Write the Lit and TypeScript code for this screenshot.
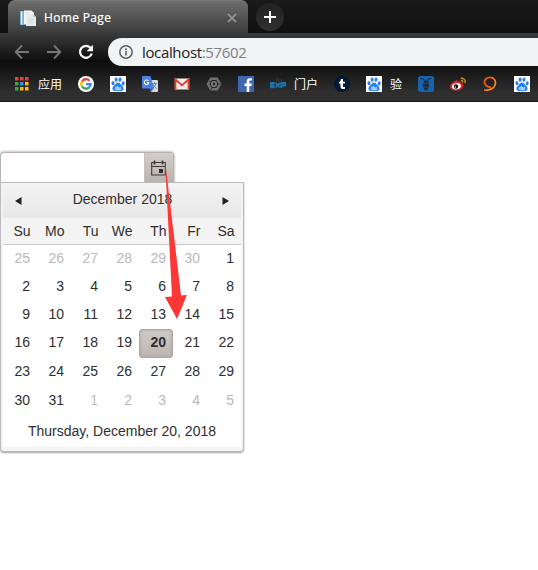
import { LitElement, html, css, svg } from "lit";
import { customElement } from "lit/decorators.js";
import { classMap } from "lit/directives/class-map.js";

const icon = (w: number, h: number, body: unknown) =>
  html`<svg width=${w} height=${h} viewBox="0 0 ${w} ${h}">${body}</svg>`;

const baidu = icon(16, 16, svg`
  <rect width="16" height="16" fill="#fff"/>
  <g fill="#2a7cf5">
    <ellipse cx="3" cy="7.2" rx="1.5" ry="2.1" transform="rotate(-12 3 7.2)"/>
    <ellipse cx="6.1" cy="3.6" rx="1.5" ry="2.2"/>
    <ellipse cx="10" cy="3.6" rx="1.5" ry="2.2" transform="rotate(10 10 3.6)"/>
    <ellipse cx="13.2" cy="7.4" rx="1.5" ry="2.1" transform="rotate(8 13.2 7.4)"/>
    <path d="M8 6.5c1.7 0 2.2 1.3 3.3 2.5 1.3 1.3 2.5 2.1 2.2 3.9-.3 2-2.200 2.300-5.500 1.800-3.300.500-5.200.200-5.500-1.800-.3-1.800.900-2.600 2.200-3.900C5.800 7.800 6.300 6.500 8 6.500z"/>
  </g>
  <text x="4.800" y="13.600" class="du">du</text>`);

const google = icon(16, 16, svg`
  <circle cx="8" cy="8" r="8" fill="#fff"/>
  <g fill="none" stroke-width="2.300">
    <path d="M4 5.500A4.750 4.750 0 0 1 11.500 4.700" stroke="#ea4335"/>
    <path d="M4 5.500A4.750 4.750 0 0 0 4 10.500" stroke="#fbbc05"/>
    <path d="M4 10.500A4.750 4.750 0 0 0 11 11.700" stroke="#34a853"/>
    <path d="M8 8.100H12.700A4.750 4.750 0 0 1 11 11.700" stroke="#4285f4"/>
  </g>`);

const translate = icon(16, 16, svg`
  <path d="M6 4h9q1 0 1 1v10q0 1-1 1H9z" fill="#d5d8dc"/>
  <path d="M9 16l-1-4 4 0z" fill="#2f5fc4"/>
  <path d="M1 0h7.500l3.700 12.500H1q-1 0-1-1V1q0-1 1-1z" fill="#4a82ea"/>
  <path d="M6.400 5A2.200 2.200 0 1 0 6.700 6.800H4.800" fill="none" stroke="#fff" stroke-width="1.100"/>
  <path d="M10 7.500h5M12.500 6.300v1.200M14 7.500q-.5 3-3.500 5M11.300 8.500q1 3 3.300 4" fill="none" stroke="#72808c" stroke-width=".9"/>`);

const gmail = icon(16, 16, svg`
  <path d="M1 2.500h14v11H1z" fill="#f1efed"/>
  <path d="M2.500 13l5.500-5 5.500 5" fill="none" stroke="#d6cfcb" stroke-width=".8"/>
  <path d="M1.400 13.500V3.500L8 9.200l6.600-5.700v10" fill="none" stroke="#dc4437" stroke-width="2"/>`);

const cube = icon(16, 16, svg`
  <path d="M5 2.800h6L14 8l-3 5.200H5L2 8z" fill="none" stroke="#707070" stroke-width="2.400"/>
  <circle cx="8" cy="8" r="2.200" fill="none" stroke="#808080" stroke-width="1.600"/>
  <path d="M3 5l2 1.500M14.500 8h-3M4.500 14.500L6 12" stroke="#292929" stroke-width=".8"/>`);

const facebook = icon(16, 16, svg`
  <rect width="16" height="16" fill="#4267b2"/>
  <path d="M8.700 16V10H6.500V7.400h2.200V5.600C8.700 3.300 10 2.200 12 2.200l1.900.1v2.300h-1.400c-1 0-1.200.5-1.200 1.300v1.500h2.500l-.4 2.600h-2.100v6z" fill="#fff"/>`);

const portal = icon(16, 16, svg`
  <path d="M6 3l1 3M8 2l1 4M11 3l1 3" stroke="#403c39" stroke-width="1"/>
  <g fill="none" stroke="#1a72ad" stroke-width="2">
    <path d="M5 7H1v4.300h3.800M1 9.200h3.500M5.500 7l4.500 4.300M10 7l-4.500 4.300M11.500 12V7h3.700v2.600h-3.500"/>
  </g>`);

const tumblr = icon(16, 16, svg`
  <circle cx="8" cy="8" r="8" fill="#001935"/>
  <path d="M7 3h2v2.700h2v1.900H9v2.600c0 1 .8 1 2 .6v1.900c-2.600.8-4.500.2-4.500-2V7.600H5V6.100C6.300 5.600 6.800 4.600 7 3z" fill="#fff"/>`);

const bee = icon(16, 16, svg`
  <rect width="16" height="16" rx="2.500" fill="#1763ad"/>
  <path d="M2.500 2.500q3.500-.5 3.700 2.500M13.500 2.500q-3.500-.5-3.700 2.500" fill="none" stroke="#172d48" stroke-width="1.100"/>
  <path d="M5.500 5.500Q8 3.500 10.500 5.500V7h-5zM5 7.500h6v4H5zM5.500 12h5Q10 14 8 14.500 6 14 5.500 12z" fill="#172d48"/>`);

const weibo = icon(16, 16, svg`
  <path d="M6.300 4.400c1.400-.4 1.900.4 1.600 1.500 2-.7 3.500-.3 3 1.200 1.800.5 2.700 1.600 2.300 3.200C12.600 13 9.500 14.500 6 14.500c-3.400 0-6-1.600-6-4.100 0-2.400 3.800-5.500 6.300-6z" fill="#e0232a"/>
  <ellipse cx="6.400" cy="10.200" rx="4.500" ry="3.100" fill="#fff" transform="rotate(-8 6.400 10.200)"/>
  <circle cx="6" cy="10.500" r="2.200" fill="#111"/><circle cx="5.300" cy="11" r=".7" fill="#fff"/>
  <path d="M10.800 2.300c3-.5 5.100 1.800 4.100 4.700M10.800 4.600c1.400-.2 2.200.6 1.800 1.900" fill="none" stroke="#c98a1c" stroke-width="1.500"/>`);

const swirl = icon(16, 16, svg`
  <path d="M9 11.500C4.500 11 1.500 8 2.600 4.800 4 1.200 8.500.6 11.300 2.600c2.900 2.200 2.700 6.200.4 8.700C9.400 13.800 6 14.300 2 14" fill="none" stroke="#ef5b12" stroke-width="1.800"/>
  <path d="M10.500 1.600c3.500 1.600 4 5.600 2 8.600-1.900 2.700-4.800 4-8.300 4.200" fill="none" stroke="#f9a51a" stroke-width=".9"/>`);

const dots = ["#ea4335", "#ea4335", "#ea4335", "#34a853", "#4285f4", "#fbbc05", "#34a853", "#fbbc05", "#fbbc05"];
const apps = icon(16, 16, dots.map((c, i) =>
  svg`<rect x=${1 + (i % 3) * 5} y=${1 + Math.floor(i / 3) * 5} width="3.500" height="3.500" fill=${c}/>`));

const bookmarks = [
  { icon: apps, label: "应用" }, { icon: google }, { icon: baidu }, { icon: translate },
  { icon: gmail }, { icon: cube }, { icon: facebook }, { icon: portal, label: "门户" },
  { icon: tumblr }, { icon: baidu, label: "验" }, { icon: bee }, { icon: weibo },
  { icon: swirl }, { icon: baidu },
];

@customElement("browser-chrome")
class BrowserChrome extends LitElement {
  static styles = css`
    :host { display: block; height: 102px; position: relative; overflow: hidden; background: #1a1a1a;
      font-family: "Open Sans", "Noto Sans", "Noto Sans CJK SC", sans-serif; color: #fff; }
    svg { display: block; flex: none; }
    .tabs { height: 33px; display: flex; background: linear-gradient(#1a1a1a, #101010); padding-left: 8px; }
    .tab { box-sizing: border-box; width: 240px; height: 33px; border-radius: 7px 7px 0 0; display: flex; align-items: center;
      padding: 1px 11px 0 12px; background: linear-gradient(#6d6d6d, #3b3b3b); border-top: 1px solid #7c7c7c; }
    .title { font-size: 12px; line-height: 18px; margin-left: 8px; flex: 1; letter-spacing: .35px; -webkit-text-stroke: .2px #fff; }
    .plus { width: 28px; height: 28px; margin: 3px 0 0 8px; border-radius: 50%; background: linear-gradient(#222, #303030);
      display: grid; place-items: center; }
    .bar { height: 33px; display: flex; box-sizing: border-box; padding: 5px 0 0 14px; background: linear-gradient(#3b3b3b, #0e0e0e 28px, #040404 28px, #111 29px); }
    .nav { width: 94px; height: 28px; display: flex; gap: 16px; align-items: center; }
    .address { flex: 1; height: 28px; display: flex; align-items: center; border-radius: 14px 0 0 14px; background: #f1f3f4;
      color: #202124; padding-left: 11px; gap: 9px; font: 15px/28px "Open Sans", "Noto Sans", sans-serif; }
    .url { letter-spacing: -.35px; padding-bottom: 1px; }
    .port { color: #7b8085; }
    .marks { height: 36px; box-sizing: border-box; border-bottom: 1px solid #151515; padding-left: 14px; display: flex; align-items: center; gap: 16px;
      background: linear-gradient(#121212, #2e2e2e 26px); }
    .mark { display: flex; gap: 8px; align-items: center; flex: none; }
    .label { font: 12px/16px "Noto Sans CJK SC", sans-serif; }
    .du { font: bold 5px "Liberation Sans", sans-serif; fill: #fff; }
  `;
  render() {
    return html`
      <div class="tabs">
        <div class="tab">
          ${icon(16, 16, svg`
            <path d="M0 1h6v14H0z" fill="#7db0cf"/><path d="M1 1.500h1.200v13H1z" fill="#e4f1f8"/>
            <path d="M4 .5h7.500L14 3v11H4z" fill="#f4f7f8"/>
            <path d="M6 4h7l3 3v9H6z" fill="#e7ebed"/><path d="M13 4v3h3" fill="#bac8d0"/>
            <path d="M8 9h6M8 11h6M8 13h6M5.500 3h5" stroke="#cbd3d8" stroke-width=".7"/>`)}
          <div class="title">Home Page</div>
          ${icon(10, 10, svg`<path d="M1 1l8 8M9 1l-8 8" stroke="#989898" stroke-width="1.700"/>`)}
        </div>
        <div class="plus">${icon(12, 12, svg`<path d="M6 0v12M0 6h12" stroke="#fff" stroke-width="2"/>`)}</div>
      </div>
      <div class="bar">
        <div class="nav">
          ${icon(16, 16, svg`<path d="M15 8H2M8 1.500L1.700 8 8 14.500" fill="none" stroke="#777" stroke-width="1.800"/>`)}
          ${icon(16, 16, svg`<path d="M1 8h13M8 1.500L14.300 8 8 14.500" fill="none" stroke="#777" stroke-width="1.800"/>`)}
          ${icon(16, 16, svg`<path d="M12.700 4A6 6 0 1 0 13.800 9.500" fill="none" stroke="#fff" stroke-width="2.200"/><path d="M15 .8v6.400H8.600z" fill="#fff"/>`)}
        </div>
        <div class="address">
          ${icon(14, 14, svg`<circle cx="7" cy="7" r="6.200" fill="none" stroke="#5f6368" stroke-width="1.500"/><path d="M7 6v4.500M7 3.300V5" stroke="#5f6368" stroke-width="1.600"/>`)}
          <div class="url">localhost<span class="port">:57602</span></div>
        </div>
      </div>
      <div class="marks">
        ${bookmarks.map((b) => html`<div class="mark">${b.icon}${b.label ? html`<span class="label">${b.label}</span>` : ""}</div>`)}
      </div>`;
  }
}

@customElement("date-picker")
class DatePicker extends LitElement {
  static styles = css`
    :host { display: block; position: relative; width: 244px; font: 14px/20px "Liberation Sans", Arial, sans-serif; color: #2e2e2e; }
    svg { display: block; }
    .field { width: 174px; height: 30px; box-sizing: border-box; border: 1px solid #b9b2ae; border-bottom: 0; border-radius: 4px 4px 0 0;
      display: flex; background: #fff; box-shadow: 0 0 2px 1px #c8c8c8; overflow: hidden; }
    .input { flex: 1; }
    .button { width: 29px; box-sizing: border-box; border-left: 1px solid #c5beba; background: linear-gradient(#d3cdca, #b9b2ae); padding: 7px 0 0 6px; }
    .popup { position: relative; width: 244px; height: 270px; box-sizing: border-box; border: 1px solid #bababa; border-radius: 0 0 4px 4px;
      padding: 2px; background: #f4f4f4; box-shadow: 0 1px 2px 0 #a5a5a5; }
    .head { height: 33px; box-sizing: border-box; display: flex; align-items: center; justify-content: space-between; padding: 0 12px 2px; background: linear-gradient(#f3f3f3, #e8e6e6); }
    .month { padding: 0 0 3px 1px; }
    .week, .days { display: grid; grid-template-columns: repeat(7, 34px); }
    .week { height: 27px; line-height: 26px; border-bottom: 1px solid #cbcbcb; box-sizing: border-box; width: 238px; }
    .days { grid-template-rows: 28px 28px 28px 29px 29px 29px; background: #fff; }
    .name { text-align: right; padding-right: 6.5px; }
    .day { box-sizing: border-box; text-align: right; padding-right: 7px; line-height: 26px; }
    .muted { color: #b8b8b8; }
    .picked { font-weight: bold; border: 1px solid #aca5a1; border-radius: 3px; background: linear-gradient(#d0cac7, #bcb5b1); padding-right: 6px; line-height: 24px;
      box-shadow: inset 0 0 3px #aaa29e; }
    .foot { height: 31px; line-height: 30px; text-align: center; background: #fff; }
    .arrow { position: absolute; left: 160px; top: 8px; }
  `;
  render() {
    const days = [25, 26, 27, 28, 29, 30, ...Array.from({ length: 31 }, (_, i) => i + 1), 1, 2, 3, 4, 5];
    return html`
      <div class="field">
        <div class="input"></div>
        <div class="button">${icon(16, 17, svg`
          <path d="M.7 2.500h13.600v12.500H.7zM.7 6.500h13.600" fill="none" stroke="#3c3835" stroke-width="1.100"/>
          <path d="M3.500 .5v4M11.500 .5v4" stroke="#3c3835" stroke-width="1.600"/>
          <path d="M8 9h4v4H8z" fill="#2e2e2e"/>`)}</div>
      </div>
      <div class="popup">
        <div class="head">
          ${icon(7, 8, svg`<path d="M6.500 0v8L0 4z" fill="#222"/>`)}
          <span class="month">December 2018</span>
          ${icon(7, 8, svg`<path d="M.5 0v8L7 4z" fill="#222"/>`)}
        </div>
        <div class="week">${["Su", "Mo", "Tu", "We", "Th", "Fr", "Sa"].map((d) => html`<div class="name">${d}</div>`)}</div>
        <div class="days">${days.map((d, i) => html`<div class=${classMap({ day: true, muted: i < 6 || i > 36, picked: i === 25 })}>${d}</div>`)}</div>
        <div class="foot">Thursday, December 20, 2018</div>
      </div>
      <svg class="arrow" width="32" height="162" viewBox="0 0 32 162"><path d="M5 0L21 135.500l6-.500L17 159 5 137l7-.500z" fill="#fd3636"/></svg>`;
  }
}

@customElement("app-root")
class AppRoot extends LitElement {
  static styles = css`
    :host { display: block; height: 570px; background: #fff; overflow: hidden; }
    .page { padding-top: 50px; }
  `;
  render() {
    return html`<browser-chrome></browser-chrome><div class="page"><date-picker></date-picker></div>`;
  }
}
